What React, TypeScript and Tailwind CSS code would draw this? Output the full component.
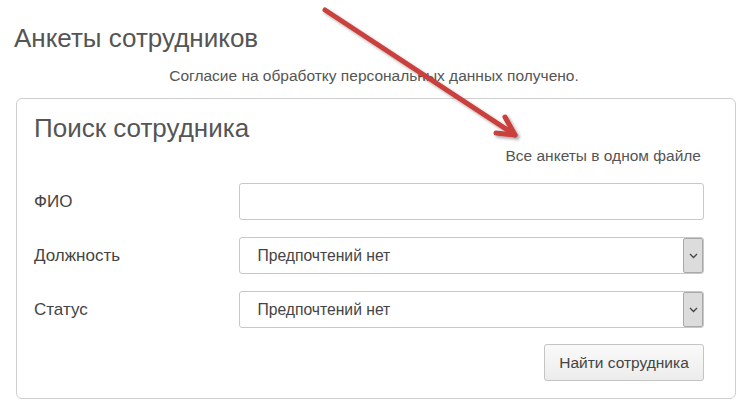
import React from 'react';

const font = { fontFamily: '"Liberation Sans", Arial, sans-serif' };

const Chevron: React.FC = () => (
  <svg width="9" height="6" viewBox="0 0 9 6" fill="none">
    <path d="M1 1l3.5 3.5L8 1" stroke="#444" strokeWidth="1.3" />
  </svg>
);

const SelectBox: React.FC<{ value: string }> = ({ value }) => (
  <div className="flex h-[37px] w-[466px] items-stretch rounded-[3px] border border-[#c8c8c8] bg-white">
    <div className="flex flex-1 items-center pl-[17px] text-[15.7px] text-[#444]">{value}</div>
    <div className="flex w-[20px] items-center justify-center rounded-[2px] border border-[#a9a9a9] bg-[#dcdcdc]">
      <Chevron />
    </div>
  </div>
);

const Row: React.FC<{ label: string; children: React.ReactNode }> = ({ label, children }) => (
  <div className="flex items-center">
    <div className="w-[206px] text-[17px] text-[#444]">{label}</div>
    {children}
  </div>
);

export default function App() {
  return (
    <div className="relative h-[409px] w-[748px] overflow-hidden bg-white" style={font}>
      <h1 className="pl-[14px] pt-[23px] text-[26px] leading-[30px] text-[#555]">Анкеты сотрудников</h1>
      <p className="mt-[14px] text-center text-[15.5px] leading-[18px] text-[#555]">
        Согласие на обработку персональных данных получено.
      </p>

      <div className="ml-[16px] mt-[13px] h-[301px] w-[720px] rounded-[6px] border border-[#cfcfcf] pl-[17px] pr-[31px] pt-[14px]">
        <h2 className="text-[26px] leading-[30px] text-[#555]">Поиск сотрудника</h2>
        <div className="mt-[4px] text-right text-[15.5px] leading-[18px] text-[#555]">
          <span className="pr-[3px]">Все анкеты в одном файле</span>
        </div>

        <div className="mt-[18px] flex flex-col gap-[17px]">
          <Row label="ФИО">
            <div className="h-[37px] w-[466px] rounded-[3px] border border-[#c8c8c8] bg-white" />
          </Row>
          <Row label="Должность">
            <SelectBox value="Предпочтений нет" />
          </Row>
          <Row label="Статус">
            <SelectBox value="Предпочтений нет" />
          </Row>
        </div>

        <div className="mt-[16px] flex justify-end">
          <button className="h-[37px] w-[160px] rounded-[3px] border border-[#c4c4c4] bg-gradient-to-b from-[#fafafa] to-[#ececec] text-[15.5px] text-[#444]">
            Найти сотрудника
          </button>
        </div>
      </div>

      <svg className="pointer-events-none absolute left-0 top-0" width="748" height="409">
        <defs>
          <filter id="sh" x="-10%" y="-10%" width="130%" height="130%">
            <feDropShadow dx="2" dy="2" stdDeviation="1.5" floodColor="#000" floodOpacity="0.35" />
          </filter>
        </defs>
        <g stroke="#c9403c" strokeWidth="5" strokeLinecap="round" strokeLinejoin="round" fill="none" filter="url(#sh)">
          <path d="M325 10L515 135" />
          <path d="M505 117L515 135L496 133" />
        </g>
      </svg>
    </div>
  );
}
